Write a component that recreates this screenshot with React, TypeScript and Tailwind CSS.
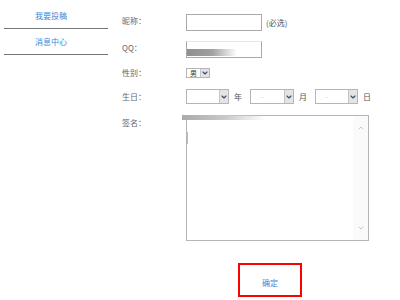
import React from "react";
import { ChevronDown, ChevronUp } from "lucide-react";

const font = { fontFamily: '"Noto Sans CJK SC", "Liberation Sans", sans-serif' };

function FakeSelect({ width, height, value, faint }: { width: string; height: string; value?: string; faint?: boolean }) {
  return (
    <div className={`${width} ${height} flex items-center justify-between border border-[#b5b5b5] bg-white`}>
      <span className={`pl-[3px] text-[7px] leading-none ${faint ? "text-[#c8c8c8] pl-[10px]" : "text-[#333]"}`}>{value}</span>
      <span className="h-full w-[9px] flex items-center justify-center bg-[#e4e4e4] border-l border-[#c6c6c6]">
        <ChevronDown className="w-[8px] h-[8px] text-[#3b4a6b]" strokeWidth={3.5} />
      </span>
    </div>
  );
}

export default function App() {
  return (
    <div className="w-[400px] h-[300px] bg-white flex text-[8px]" style={font}>
      {/* left nav */}
      <div className="w-[104px] ml-[4px] pt-[3px] flex flex-col">
        <div className="h-[26px] flex items-center justify-center pr-[10px] border-b border-[#777] text-[#3d86d8]">我要投稿</div>
        <div className="h-[26px] flex items-center justify-center pr-[10px] border-b border-[#777] text-[#3d86d8]">消息中心</div>
      </div>

      {/* form */}
      <div className="ml-[14px] flex flex-col text-[#666]">
        <div className="mt-[14px] h-[17px] flex items-center">
          <span className="w-[64px] -mt-[4px]">昵称：</span>
          <div className="w-[76px] h-[17px] border border-[#a9a9a9] bg-white" />
          <span className="ml-[4px] text-[#555]">(必选)</span>
        </div>

        <div className="mt-[10px] h-[17px] flex items-center">
          <span className="w-[64px] -mt-[4px]">QQ：</span>
          <div className="w-[76px] h-[17px] border border-[#a9a9a9] border-t-[#e8e8e8] bg-white flex flex-col justify-end pb-[1px]">
            <div className="w-[50px] h-[7px] bg-gradient-to-r from-[#909090] via-[#a0a0a0] to-transparent" />
          </div>
        </div>

        <div className="mt-[10px] h-[10px] flex items-center">
          <span className="w-[64px]">性别：</span>
          <FakeSelect width="w-[24px]" height="h-[10px]" value="男" />
        </div>

        <div className="mt-[11px] h-[15px] flex items-center">
          <span className="w-[64px]">生日：</span>
          <FakeSelect width="w-[43px]" height="h-[15px]" />
          <span className="ml-[5px] mr-[8px] text-[#555]">年</span>
          <FakeSelect width="w-[44px]" height="h-[15px]" value="-" faint />
          <span className="ml-[5px] mr-[8px] text-[#555]">月</span>
          <FakeSelect width="w-[43px]" height="h-[15px]" value="-" faint />
          <span className="ml-[5px] text-[#555]">日</span>
        </div>

        <div className="mt-[11px] flex items-start">
          <span className="w-[64px] mt-[2px]">签名：</span>
          <div className="relative w-[183px] h-[126px] border border-[#b5b5b5] bg-white flex">
            <div className="absolute -top-[1px] -left-[5px] w-[84px] h-[5px] bg-gradient-to-r from-[#aaa] via-[#c8c8c8] to-transparent" />
            <div className="flex-1 pt-[16px]">
              <div className="w-[1px] h-[12px] bg-[#bbb]" />
            </div>
            <div className="w-[15px] h-full bg-[#fafafa] flex flex-col items-center justify-between py-[8px]">
              <ChevronUp className="w-[8px] h-[8px] text-[#b0b0b0]" strokeWidth={2} />
              <ChevronDown className="w-[8px] h-[8px] text-[#b0b0b0]" strokeWidth={2} />
            </div>
          </div>
        </div>

        <div className="mt-[22px] ml-[116px] w-[64px] h-[34px] border-2 border-[#ff0000] flex items-end justify-center pb-[6px] text-[#3d86d8]">
          确定
        </div>
      </div>
    </div>
  );
}
